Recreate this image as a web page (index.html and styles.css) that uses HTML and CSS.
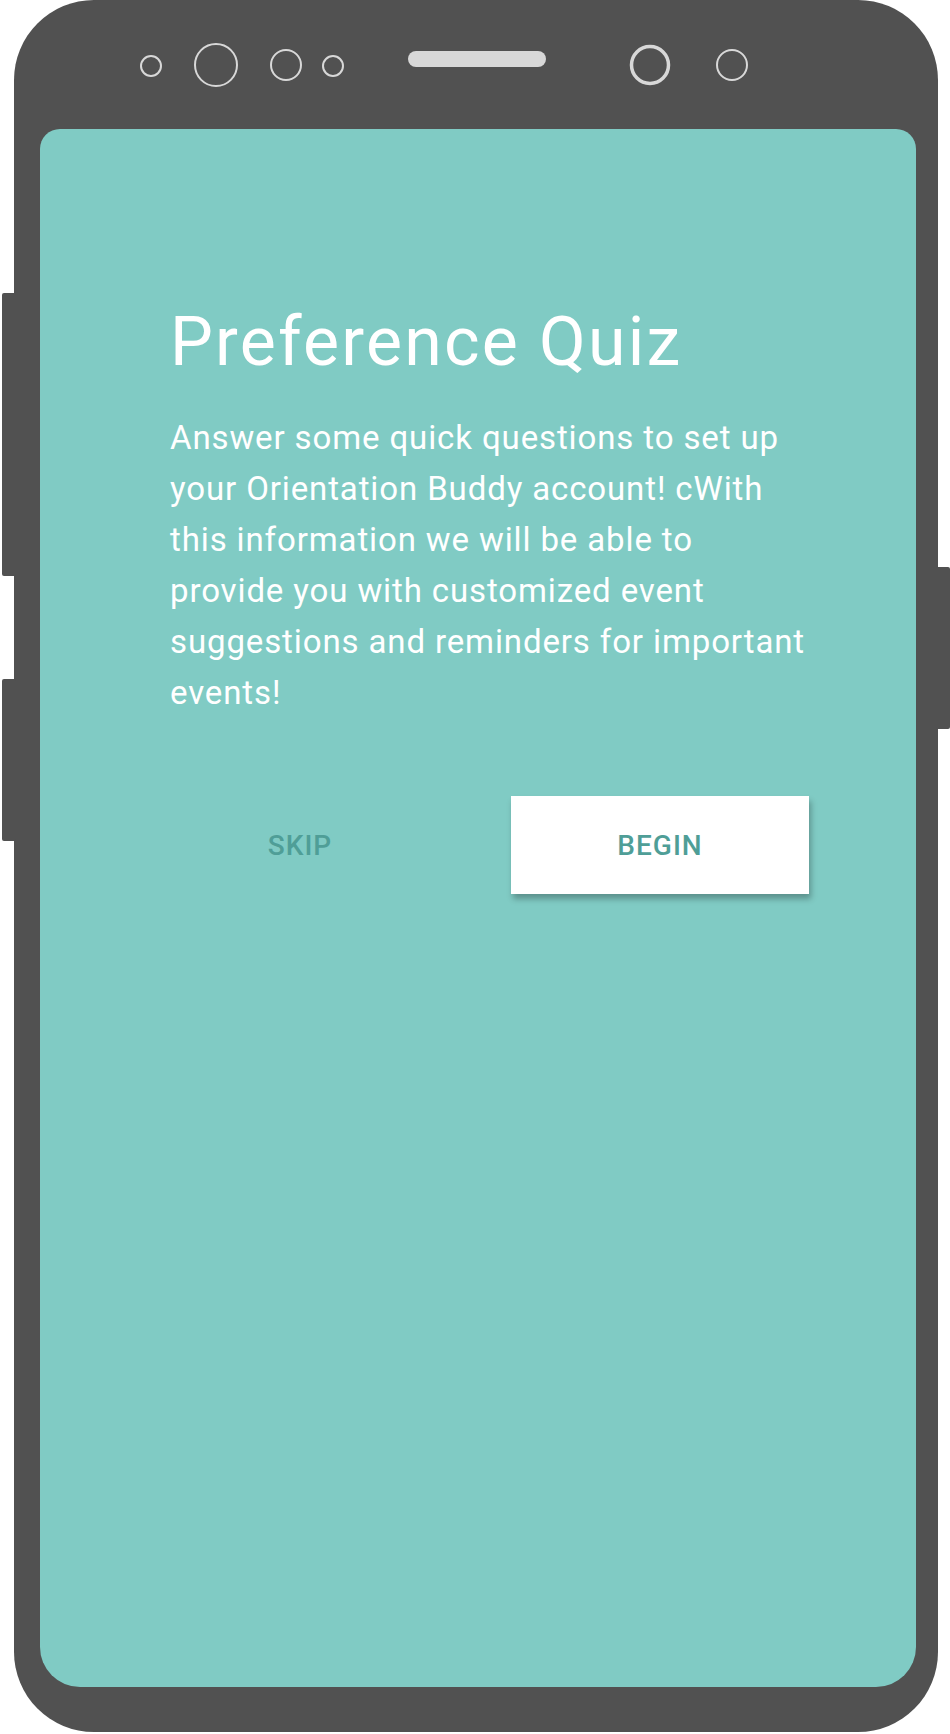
FILE: index.html
```html
<!DOCTYPE html>
<html lang="en">
<head>
<meta charset="utf-8">
<title>Preference Quiz</title>
<link rel="stylesheet" href="styles.css">
</head>
<body>
<div class="device">
  <div class="side-btn side-left-1"></div>
  <div class="side-btn side-left-2"></div>
  <div class="side-btn side-right"></div>
  <div class="phone">
    <div class="topbar">
      <svg width="924" height="129" viewBox="0 0 924 129" xmlns="http://www.w3.org/2000/svg">
        <g fill="none" stroke="#d8d8d8" stroke-width="2">
          <circle cx="137" cy="66" r="10"/>
          <circle cx="202" cy="65" r="21"/>
          <circle cx="272" cy="65" r="15"/>
          <circle cx="319" cy="66" r="10"/>
          <circle cx="718" cy="65" r="15"/>
        </g>
        <circle cx="636" cy="65" r="18.5" fill="none" stroke="#d8d8d8" stroke-width="3.5"/>
        <rect x="394" y="51" width="138" height="16" rx="8" fill="#d8d8d8"/>
      </svg>
    </div>
    <div class="screen">
      <div class="content">
        <h1 class="title">Preference Quiz</h1>
        <p class="intro">Answer some quick questions to set up<br>your Orientation Buddy account! cWith<br>this information we will be able to<br>provide you with customized event<br>suggestions and reminders for important<br>events!</p>
        <div class="actions">
          <button class="btn btn-skip">SKIP</button>
          <button class="btn btn-begin">BEGIN</button>
        </div>
      </div>
    </div>
  </div>
</div>
</body>
</html>
```

FILE: styles.css
```css
* { box-sizing: border-box; }

html, body {
  margin: 0;
  padding: 0;
  background: #ffffff;
}

body {
  font-family: Roboto, "Noto Sans", "Liberation Sans", sans-serif;
}

.device {
  position: relative;
  width: 950px;
  height: 1734px;
  padding-left: 14px;
}

.phone {
  width: 924px;
  height: 1732px;
  background: #515151;
  border-radius: 80px;
  display: flex;
  flex-direction: column;
}

.topbar {
  height: 129px;
  flex: 0 0 129px;
}

.topbar svg {
  display: block;
}

.side-btn {
  position: absolute;
  background: #515151;
  width: 14px;
  border-radius: 2px;
}

.side-left-1 { left: 2px; top: 293px; height: 283px; }
.side-left-2 { left: 2px; top: 679px; height: 162px; }
.side-right { left: 936px; top: 567px; height: 162px; }

.screen {
  margin-left: 26px;
  width: 876px;
  height: 1558px;
  background: #80cbc4;
  border-radius: 20px 20px 40px 40px;
}

.content {
  padding: 175px 0 0 130px;
  width: 800px;
}

.title {
  margin: 0;
  font-size: 68px;
  line-height: 76px;
  font-weight: 400;
  color: #ffffff;
  letter-spacing: 2.2px;
}

.intro {
  margin: 32px 0 0 0;
  font-size: 33px;
  line-height: 51px;
  font-weight: 400;
  color: #ffffff;
  letter-spacing: 0.88px;
  white-space: nowrap;
}

.actions {
  margin-top: 78px;
  display: flex;
  justify-content: space-between;
  width: 639px;
}

.btn {
  font-family: Roboto, "Noto Sans", "Liberation Sans", sans-serif;
  font-size: 28px;
  font-weight: 500;
  letter-spacing: 1px;
  color: #4f9e97;
  border: 0;
  height: 98px;
  padding: 0;
  cursor: pointer;
}

.btn-skip {
  width: 260px;
  background: transparent;
}

.btn-begin {
  width: 298px;
  background: #ffffff;
  box-shadow: 2px 5px 6px rgba(0, 0, 0, 0.28);
}
```
